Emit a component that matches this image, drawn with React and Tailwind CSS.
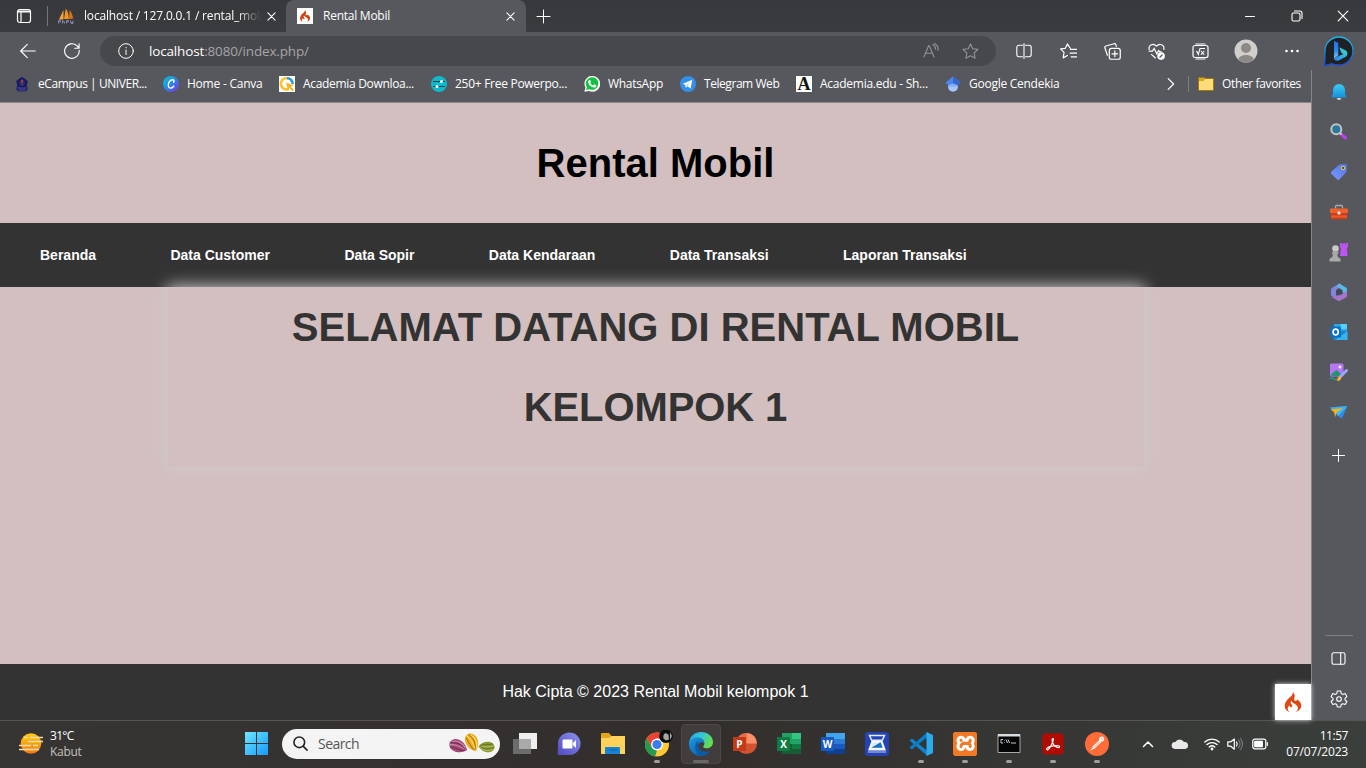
import React from "react";
import { SiCodeigniter, SiXampp } from "react-icons/si";

function Svg({ size = 16, box = 16, children, className = "" }) {
  return (
    <svg width={size} height={size} viewBox={`0 0 ${box} ${box}`} fill="none" className={`shrink-0 ${className}`}>
      {children}
    </svg>
  );
}

function Line({ size = 16, box = 16, w = 1.1, color = "#fff", children }) {
  return (
    <Svg size={size} box={box}>
      <g stroke={color} strokeWidth={w} strokeLinecap="round" strokeLinejoin="round">{children}</g>
    </Svg>
  );
}

const Cross = ({ size = 9, w = 1.2 }) => (
  <Line size={size} box={10} w={w}><path d="M1 1l8 8M9 1l-8 8" /></Line>
);

const starPath = "M8 .9l2.1 4.5 4.9.6-3.6 3.4.9 4.9L8 11.9l-4.3 2.4.9-4.9L1 6l4.9-.6z";

function TitleBar() {
  return (
    <div className="flex h-8 shrink-0 bg-linear-to-b from-[#37383b] to-[#3b3c40]">
      <div className="flex w-[47px] items-center pl-4">
        <Line w={1.2}>
          <rect x="1.500" y="1.500" width="13" height="13" rx="2.200" />
          <path d="M2 3h12M2 4h12M5 4v10" />
        </Line>
      </div>
      <div className="flex w-[239px] items-center">
        <div className="h-5 w-px bg-[#74757a]" />
        <div className="ml-[10px] flex w-4 justify-center">
          <Svg>
            <path d="M1 11.5L5.500 2v9.500z" fill="#f7a33b" />
            <path d="M6 11L7.800.5c2.200 3 3 6.500 3 10.500z" fill="#f39322" />
            <path d="M11 11l.6-9c2.200 2.600 3 5.500 3.500 8.500z" fill="#d8741c" />
            <path d="M.5 15.500v-3h2v1.500h-2M4.500 12v3.500m0-1.700h2v1.700M8.500 15.500v-3h2v1.500h-2M12.500 12.500v2h2.500m0-2v3h-2" stroke="#8b8cb8" strokeWidth=".9" />
          </Svg>
        </div>
        <div className="ml-[10px] w-[178px] whitespace-nowrap text-[12px] tracking-[-0.17px] text-white mask-linear-[90deg,black_86%,transparent_99%]">
          <span>localhost / 127.0.0.1 / rental_mob</span>
        </div>
        <div className="ml-[5px]"><Cross /></div>
      </div>
      <div className="flex w-[240px] items-center rounded-t-lg bg-[#57585d] pl-[11px]">
        <div className="flex h-4 w-4 items-center justify-center bg-white"><SiCodeigniter size={12} color="#d34212" /></div>
        <span className="ml-[10px] w-[183px] whitespace-nowrap text-[12px] tracking-[-0.25px] text-white">Rental Mobil</span>
        <Cross />
      </div>
      <div className="flex grow items-center pl-[10px]">
        <Line size={15} box={15} w={1}><path d="M7.500 1v13M1 7.500h13" /></Line>
      </div>
      <div className="flex items-center pr-[17px]">
        <Line size={12} box={12} w={1}><path d="M1.500 6.500h9" /></Line>
        <div className="ml-[35px]">
          <Line size={12} box={12} w={1.1}>
            <rect x="1" y="3" width="8" height="8" rx="1.600" />
            <path d="M3.400 1h5.300A2.300 2.300 0 0 1 11 3.300v5.200" />
          </Line>
        </div>
        <div className="ml-[34px]"><Cross size={12} w={1} /></div>
      </div>
    </div>
  );
}

function BingLogo() {
  return (
    <svg width="32" height="32" viewBox="0 0 32 32" fill="none">
      <defs>
        <linearGradient id="bingRing" x1="0" y1="0" x2="0" y2="1"><stop stopColor="#1fb7e4" /><stop offset="1" stopColor="#1c4ad0" /></linearGradient>
        <linearGradient id="bingB" x1="0" y1="0" x2="0" y2="1"><stop stopColor="#1e74ea" /><stop offset=".55" stopColor="#2a87f0" /><stop offset="1" stopColor="#7cc2fb" /></linearGradient>
        <linearGradient id="bingC" x1="0" y1="1" x2="1" y2="0"><stop stopColor="#2d7ff5" /><stop offset="1" stopColor="#35e3c6" /></linearGradient>
      </defs>
      <path d="M2.500 30.500q-1 .2-.9-.8L2 16A14 14 0 1 1 16 30c-3 0-5-.3-7-1.200z" fill="#202124" stroke="url(#bingRing)" strokeWidth="1.400" />
      <path d="M11 6l4.300 1.800v12.700L11 23.500z" fill="url(#bingB)" />
      <path d="M16.300 12.200l6.600 3.300c2.200 1.500 1.800 5-.2 6.300l-6.900 3.700c-2 .6-4.500 0-4.800-2.300l9.200-4.200-2.200-1.400z" fill="url(#bingC)" />
    </svg>
  );
}

function Toolbar() {
  return (
    <div className="flex h-[38px] shrink-0 items-center bg-[#57585d]">
      <div className="flex w-[100px] items-center pl-5">
        <Line><path d="M15.300 8H.8M7.300 1.300L.7 8l6.600 6.700" /></Line>
        <div className="ml-7">
          <Line w={1.15}><path d="M15.200 7.400A7.300 7.300 0 1 1 12.800 2.600L14.900 5M15.100 .8v4.400h-4.400" /></Line>
        </div>
      </div>
      <div className="flex h-[30px] w-[896px] items-center rounded-full bg-[#47484b] pl-[18px]">
        <Line w={1}><circle cx="8" cy="8" r="7.300" /><path d="M8 7v4.500M8 4.500v.3" /></Line>
        <div className="ml-[15px] w-[774px] whitespace-nowrap text-[13.500px] tracking-[-0.16px] text-white">localhost<span className="text-[#a6a6a8]">:8080/index.php/</span></div>
        <Line color="#929396" w={1.1}><path d="M1 14L5.600 2.800h.8L11 14M2.700 10.200h6.600M9.800 1.500c2 1 2.900 2.900 2.700 4.800M11.500.5c2.900 1.500 4 4.100 3.500 7" /></Line>
        <div className="ml-[23px]"><Line color="#929396" size={17} w={1.05}><path d={starPath} /></Line></div>
      </div>
      <div className="ml-[6px] flex items-center">
        <div className="flex w-11 justify-center">
          <Line w={1.1}><path d="M6.500 2.200H3A2.200 2.200 0 0 0 .8 4.400v7.200A2.200 2.200 0 0 0 3 13.800h3.500M9.500 2.200H13a2.200 2.200 0 0 1 2.200 2.200v7.200a2.200 2.200 0 0 1-2.200 2.200H9.500M8 .6v14.800" /></Line>
        </div>
        <div className="flex w-11 justify-center">
          <Line size={17} w={1.1}><path d="M9.700 5L7 .9 5 5l-4.500.6 3.300 3.200L3 14l4-2.300M10 6h5.800M9.500 9.500h6.300M10.500 13h5.300" /></Line>
        </div>
        <div className="flex w-11 justify-center">
          <Line size={17} w={1.15}><rect x="5" y="5" width="10.300" height="10.300" rx="2" /><path d="M10.200 7.500v5.300M7.500 10.200h5.300M3.200 11.500L.8 4.500Q.5 3.200 1.800 2.800L9.500.7q1.200-.3 1.700.9l.4 1.500" /></Line>
        </div>
        <div className="flex w-11 justify-center">
          <Svg size={17}>
            <path d="M1.300 6.300C-.2 2.500 4.500-.5 8 3c3.500-3.500 8.200-.5 6.700 3.300M.6 7.600h3.600l1.600-2.500 2.500 5 1.700-3 1 1.300h2M3 10.500l4.200 3.800" stroke="#fff" strokeWidth="1.150" />
            <circle cx="12.300" cy="12.300" r="3.600" fill="#fff" /><path d="M10.900 13.700l2.800-2.800" stroke="#57585d" strokeWidth="1.200" />
          </Svg>
        </div>
        <div className="flex w-11 justify-center">
          <Svg size={17} box={17}>
            <rect x="1" y="2.500" width="15" height="12" rx="2" stroke="#fff" strokeWidth="1.200" />
            <path d="M3.500 1h10M3.500 16h10M4 8.700l1-.2 1.300 3L8 5.500h5M9 8l3.200 3.700M12.200 8L9 11.700" stroke="#fff" strokeWidth="1.050" />
          </Svg>
        </div>
        <div className="flex w-12 justify-center">
          <Svg size={24} box={24}>
            <circle cx="12" cy="12" r="11.500" fill="#d1cfcb" />
            <circle cx="12" cy="9" r="5" fill="#8d8984" /><path d="M4.300 20.500c1-6 14.400-6 15.400 0C15 24.500 9 24.500 4.300 20.500z" fill="#8d8984" />
          </Svg>
        </div>
        <div className="flex w-11 justify-center">
          <Svg><g fill="#fff"><circle cx="2.500" cy="8" r="1.300" /><circle cx="8" cy="8" r="1.300" /><circle cx="13.500" cy="8" r="1.300" /></g></Svg>
        </div>
        <div className="ml-[9px]"><BingLogo /></div>
      </div>
    </div>
  );
}

function Bookmark({ icon, label, className }) {
  return (
    <div className={`flex shrink-0 items-center gap-2 whitespace-nowrap ${className}`}>
      {icon}
      <span>{label}</span>
    </div>
  );
}

function Bookmarks() {
  return (
    <div className="flex h-[33px] shrink-0 items-center border-b border-[#8b8889] bg-[#57585d] pb-1 pl-[14px] text-[12px] text-white">
      <Bookmark className="w-[149px] tracking-[-0.44px]" label="eCampus | UNIVER..." icon={
        <Svg><path d="M8 .5l6 4.500-1 4 1 4.500-2.500 2h-7L2 13.500l1-4.500-1-4z" fill="#28286f" /><circle cx="8" cy="7" r="4" stroke="#14144e" strokeWidth="1.500" /><path d="M8 3v7M4 12h8M5 14h6" stroke="#454594" /><path d="M7.200 4h1.600v3H7.200z" fill="#c03c38" /></Svg>} />
      <Bookmark className="w-[116px] tracking-[-0.23px]" label="Home - Canva" icon={
        <Svg>
          <defs><linearGradient id="canva" x1="0" y1="0" x2="1" y2="1"><stop stopColor="#08c9cf" /><stop offset=".5" stopColor="#2888e4" /><stop offset="1" stopColor="#8b23ed" /></linearGradient></defs>
          <circle cx="8" cy="8" r="8" fill="url(#canva)" />
          <path d="M10.600 6.300c.8-1 .5-2.600-1-2.600C7 3.700 5 6.800 5.300 9.700c.3 3 3.300 3.200 5.400.5" stroke="#fff" strokeWidth="1.400" strokeLinecap="round" />
        </Svg>} />
      <Bookmark className="w-[152px] tracking-[-0.32px]" label="Academia Downloa..." icon={
        <Svg><path d="M0 0h16v16H0z" fill="#fff" /><path d="M8 2.200A5.600 5.600 0 1 0 9.500 13" stroke="#f9c32c" strokeWidth="2.600" /><path d="M8 2.200a5.600 5.600 0 0 1 5.700 6" stroke="#279bd8" strokeWidth="2.600" /><path d="M7 6.500l7.500 2.700-2.700 1.500 3.200 3-1.500 1.500-3.200-3.200-1.300 2.500z" fill="#f9b51c" /></Svg>} />
      <Bookmark className="w-[153px] tracking-[-0.28px]" label="250+ Free Powerpo..." icon={
        <Svg><circle cx="8" cy="8" r="8" fill="#0eb9cb" /><path d="M2 5.500h12M2 10.500h12" stroke="#163c4a" strokeWidth="1.200" /><circle cx="10.500" cy="5.500" r="1.500" fill="#fff" /><circle cx="6" cy="10.500" r="1.500" fill="#fff" /></Svg>} />
      <Bookmark className="w-[96px] tracking-[-0.3px]" label="WhatsApp" icon={
        <Svg><path d="M.3 15.800l1.200-4A7.900 7.900 0 1 1 5 15z" fill="#fff" /><path d="M2 14l.9-2.800A6.300 6.300 0 1 1 5.500 13.300z" fill="#13c143" /><path d="M5.100 4.200c.8-.6 1.300-.2 1.800 1.300.1.500-.4.900-.7 1.200.7 1.300 1.600 2.200 3.100 2.800l.9-1c.5-.2 1.800.6 2.100.9-.1 1.700-1.500 2.300-2.700 2.100C6.800 11 4.400 8.600 4.100 6c0-.7.400-1.400 1-1.800z" fill="#fff" /></Svg>} />
      <Bookmark className="w-[116px] tracking-[-0.44px]" label="Telegram Web" icon={
        <Svg><circle cx="8" cy="8" r="8" fill="#3390ec" /><path d="M2.500 8l9.800-4.200-1.700 8.600-3.200-2.200-1.700 1.600-.4-3z" fill="#fff" /><path d="M6 9l4-2.800-2.700 4" fill="#a9d1f8" /></Svg>} />
      <Bookmark className="w-[149px] tracking-[-0.26px]" label="Academia.edu - Sh..." icon={
        <span className="flex h-4 w-4 shrink-0 items-center justify-center bg-white font-['Liberation_Serif',serif] text-[18px] leading-none font-bold tracking-normal text-[#161616]">A</span>} />
      <Bookmark className="w-[212px] tracking-[-0.26px]" label="Google Cendekia" icon={
        <Svg><circle cx="8" cy="10.800" r="4.900" fill="#a5c5fb" /><path d="M3.100 10.500a5 5 0 0 1 9.800 0z" fill="#7facf8" /><path d="M8 .5L.3 6.700l3.300 2.600q4.400-3.600 8.800 0l3.300-2.600z" fill="#4e86ee" /><path d="M8 .5l7.700 6.200-3.300 2.600Q10.500 7.500 8 7.200z" fill="#3567d0" /></Svg>} />
      <div className="ml-[8px]"><Line size={12} box={12} w={1.2}><path d="M3.200.6L8.600 6l-5.400 5.400" /></Line></div>
      <div className="ml-[11px] h-4 w-px bg-[#7c7d82]" />
      <div className="ml-[9px] flex items-center gap-2 whitespace-nowrap tracking-[-0.36px]">
        <Svg><path d="M.5 2.500q0-1 1-1h4.300l1.200 1h7.500q1 0 1 1v10q0 1-1 1h-13q-1 0-1-1z" fill="#ffdc7a" stroke="#a1780a" /><path d="M1 2h4.800l1 1.600L5.500 5H1z" fill="#dba51f" /></Svg>
        <span>Other favorites</span>
      </div>
    </div>
  );
}

const menu = ["Beranda", "Data Customer", "Data Sopir", "Data Kendaraan", "Data Transaksi", "Laporan Transaksi"];

function Page() {
  return (
    <div className="flex h-[617px] flex-col bg-[#d3bfbf] font-['Liberation_Sans',Arial,sans-serif]">
      <header className="flex h-[120px] items-center justify-center">
        <h1 className="text-[40px] leading-none font-bold text-black">Rental Mobil</h1>
      </header>
      <nav className="flex h-16 items-center gap-[74.4px] bg-[#333] pl-10 text-[14px] font-bold whitespace-nowrap text-white">
        {menu.map((m) => <a key={m}>{m}</a>)}
      </nav>
      <main className="grow">
        <div className="mx-auto h-[180px] w-[976px] bg-[#d3bfbf] text-center text-[40px] leading-[80px] font-bold text-[#333] shadow-[0_0_15px_1px_#ccc]">
          <h2>SELAMAT DATANG DI RENTAL MOBIL</h2>
          <h2 className="tracking-[-0.1px]">KELOMPOK 1</h2>
        </div>
      </main>
      <footer className="relative flex h-14 items-center bg-[#333] text-[16px] text-white">
        <div className="w-9" />
        <p className="grow text-center">Hak Cipta © 2023 Rental Mobil kelompok 1</p>
        <div className="mt-5 flex h-9 w-9 items-center justify-center bg-white shadow-[0_0_5px_#ddd]"><SiCodeigniter size={20} color="#dd4814" /></div>
      </footer>
    </div>
  );
}

const sideIcons = [
  <Svg key="bell" size={18} box={18}><defs><linearGradient id="bell" x1="0" y1="0" x2="0" y2="1"><stop stopColor="#3ccbf4" /><stop offset="1" stopColor="#1490df" /></linearGradient></defs><path d="M6.500 15h5l-1.500 2H8z" fill="#ccc" /><path d="M9 1a6 6 0 0 1 6 6v4l1.300 2.300q.4 1.200-.8 1.200h-13q-1.200 0-.8-1.200L3 11V7a6 6 0 0 1 6-6z" fill="url(#bell)" /></Svg>,
  <Svg key="search" size={18} box={18}><path d="M11.500 11.500l4 3.500" stroke="#c13ff0" strokeWidth="3" strokeLinecap="round" /><path d="M9.500 9.500l2 2" stroke="#ccc" strokeWidth="2" /><circle cx="6.300" cy="6.300" r="5" fill="#28799e" stroke="#c3c3c1" strokeWidth="2" /></Svg>,
  <Svg key="tag" size={18} box={18}><defs><linearGradient id="tag" x1="1" y1="0" x2="0" y2="1"><stop stopColor="#4b78e8" /><stop offset="1" stopColor="#8097ff" /></linearGradient></defs><path d="M9.500 1.500l6-.5q1.500 0 1.500 1.500L16.500 9l-7 7.300q-1.300 1-2.500 0L1.500 11Q.5 9.800 1.500 8.600z" fill="url(#tag)" /><circle cx="13" cy="5" r="1.700" fill="#344c8a" stroke="#f0c62b" strokeWidth="1.100" /></Svg>,
  <Svg key="box" size={18} box={18}><path d="M5.500 5.500V3.500q0-1 1-1h5q1 0 1 1v2" stroke="#aaa" strokeWidth="1.300" /><rect x="0" y="5.500" width="18" height="4.500" rx=".7" fill="#ef6229" /><path d="M1 10h16v5.500q0 .8-.8.800H1.800q-.8 0-.8-.8z" fill="#cf3c18" /><path d="M1 13.500h16" stroke="#ed5a28" strokeWidth="2" /><circle cx="9" cy="10" r="1.700" fill="#ddd" /></Svg>,
  <Svg key="games" size={19} box={19}><path d="M11 0h2v1.500h1V0h2v1.500h1V0h2v4l-1.200 1 .7 8H11l.9-8-.9-1z" fill="#bd54f5" /><circle cx="6.500" cy="5.500" r="3.300" fill="#c9c9c9" /><path d="M3.500 8.500h6V10l-1 1v2.500l3 2.500v2.500h-11V16l3.200-2.500V11l-.9-1z" fill="#aaa" /></Svg>,
  <Svg key="m365" size={18} box={18}><path d="M10 .3L2.500 4.500Q1 5.300 1 7v5.500l5 2.800V8.200q0-1.500 1.300-2.300L12 3.200z" fill="#8583db" /><path d="M9 .5l7 4q1 .7 1 2V12l-4.500-2.500V7L6.500 3.500z" fill="#57bae9" /><path d="M17 10v3q0 1-1 1.500l-6 3.200q-1 .5-2 0L1.500 14l9.500-2.500L17 8z" fill="#a475ca" /><path d="M9 6l3.300 1.800v3L9 12.500 6 11V7.700z" fill="#44475a" /></Svg>,
  <Svg key="outlook" size={18} box={18}><path d="M4 1h13v9H4z" fill="#28a8e8" /><path d="M10.500 1H17v5h-6.500z" fill="#56cffa" /><path d="M3.500 8h14v9h-14z" fill="#1683d0" /><path d="M5 17L17.500 8v9z" fill="#36b2ee" /><rect x=".5" y="3.500" width="10.500" height="11" rx="1" fill="#0870c3" /><ellipse cx="5.700" cy="9" rx="2.600" ry="2.900" stroke="#fff" strokeWidth="1.600" /></Svg>,
  <Svg key="image" size={19} box={19}><rect x="1" y=".5" width="13.500" height="13" rx="1.500" fill="#b777f4" /><path d="M1 12.500l5.500-5q1-.7 2 0l5 5-1.500 1z" fill="#20966e" /><circle cx="11" cy="4" r="1.500" fill="#f6e8ff" /><path d="M17.500 7.500L11 14" stroke="#9ba4f5" strokeWidth="3" strokeLinecap="round" /><path d="M10.500 13l2 2-2 2.700H7.500q1.500-1.200 1-2.500z" fill="#f8b52d" /><path d="M.5 16q3-2 4-.5c.8 1.500 2 .7 3.500.7" stroke="#1ba67a" strokeWidth="1.300" /></Svg>,
  <Svg key="plane" size={18} box={18}><path d="M0 4.500L17.500 3 12 15.500 8 13z" fill="#2d8ce7" /><path d="M17.500 3L8 13l-2.500-4z" fill="#45b8f8" /><path d="M0 4.500L17 3 5.500 9z" fill="#3bb1ef" /><path d="M.5 6.500L13 5 6.500 9.500 5.200 14 4 9z" fill="#fbb416" /></Svg>,
];

function Sidebar() {
  return (
    <aside className="flex h-[650px] w-[55px] shrink-0 flex-col items-center border-l border-[#85868a] bg-[#57585d] pt-[2px] pr-px">
      {sideIcons.map((i, n) => <div key={n} className="flex h-10 w-10 shrink-0 items-center justify-center">{i}</div>)}
      <div className="mt-[7px] flex h-8 items-center"><Line size={13} box={13} w={1}><path d="M6.500.5v12M.5 6.500h12" /></Line></div>
      <div className="mt-[164px] h-px w-7 bg-[#7f8084]" />
      <div className="mt-[15px]"><Line size={15} box={15} w={1.1}><rect x="1" y="1.700" width="13" height="11.600" rx="1.800" /><path d="M9.700 2v11" /></Line></div>
      <div className="mt-6"><Line size={18} box={18} w={1.1}><circle cx="9" cy="9" r="2.300" /><path d="M7.300 1h3.400l.5 2.500 1.500.9 2.500-.8 1.700 3-1.900 1.700v1.500l1.900 1.700-1.700 3-2.500-.8-1.500.8-.5 2.500H7.300l-.5-2.500-1.500-.8-2.500.8-1.700-3L3 9.800V8.300L1.100 6.600l1.700-3 2.500.8 1.500-.9z" /></Line></div>
    </aside>
  );
}

function Task({ children, running, active }) {
  return (
    <div className="flex h-10 w-11 shrink-0 items-center justify-center">
      <div className={`flex h-10 w-10 flex-col items-center justify-end rounded ${active ? "border border-[#4b4846] bg-[#403d3c]" : "border border-transparent"}`}>
        <div className="flex h-7 items-center">{children}</div>
        <div className={`mt-[2px] h-[3px] rounded-full ${active ? "w-4 bg-[#6a6867]" : running ? "w-[6px] bg-[#a09f9e]" : "w-0"}`} />
      </div>
    </div>
  );
}

function Office({ letter, children, bg }) {
  return (
    <div className="relative">
      <Svg size={24} box={24}>{children}</Svg>
      <span className={`absolute top-[5px] left-0 flex h-[14px] w-[13px] items-center justify-center font-['Open_Sans',sans-serif] text-[10px] leading-none font-bold text-white ${bg}`}>{letter}</span>
    </div>
  );
}

function Pod({ x, y, angle, fill, light, dark, s = 1 }) {
  return (
    <g transform={`translate(${x} ${y}) rotate(${angle}) scale(${s})`}>
      <path d="M-9 0C-8-8 4-9 10 1 4 8-8 8-9 0z" fill={fill} />
      <path d="M-7-2C-3-5 4-5 8 0M-8 1.500C-3-.5 4-.5 8 1" stroke={light} strokeWidth="1.100" fill="none" />
      <path d="M-8-.5C-3-3 3-3 8 .5M-7 3.500C-3 2.500 4 4 8 1.500" stroke={dark} strokeWidth=".9" fill="none" />
    </g>
  );
}

function Taskbar() {
  return (
    <div className="flex h-12 shrink-0 items-center border-t border-[#565554] bg-linear-to-r from-[#373534] via-[#322e2c] to-[#3a3f3c] pb-[2px]">
      <div className="flex w-[234px] items-center pl-[19px]">
        <Svg size={24} box={24}>
          <defs><linearGradient id="sun" x1="0" y1="0" x2="0" y2="1"><stop stopColor="#ffce0b" /><stop offset="1" stopColor="#f47713" /></linearGradient></defs>
          <circle cx="12" cy="11.500" r="10.300" fill="url(#sun)" />
          <path d="M5 5.500h4M11 5.500h13M9 9.500h15M0 13.500h12M14 13.500h5M0 17.500h20" stroke="#f7dcae" strokeWidth="1.600" />
        </Svg>
        <div className="ml-[7px] flex flex-col text-[12px] leading-4 whitespace-nowrap">
          <span className="tracking-[-0.7px] text-white">31°C</span>
          <span className="tracking-[-0.3px] text-[#c2c0bf]">Kabut</span>
        </div>
      </div>
      <div className="flex w-11 justify-center">
        <Svg size={23} box={23}>
          <defs><linearGradient id="win" gradientUnits="userSpaceOnUse" x1="0" y1="0" x2="23" y2="23"><stop stopColor="#70e5ff" /><stop offset="1" stopColor="#139aff" /></linearGradient></defs>
          <path d="M0 0h11v11H0zM12 0h11v11H12zM0 12h11v11H0zM12 12h11v11H12z" fill="url(#win)" />
        </Svg>
      </div>
      <div className="ml-1 flex h-[30px] w-[218px] items-center rounded-full bg-[#f4f4f4] pl-[11px]">
        <Line color="#222" w={1.7} size={15}><circle cx="6.700" cy="6.700" r="5.700" /><path d="M11 11l4 4" /></Line>
        <span className="ml-[10px] w-[128px] text-[14px] tracking-[-0.55px] text-[#555]">Search</span>
        <svg width="50" height="22" viewBox="0 0 50 22">
          <Pod x={12} y={13} angle={20} fill="#a34976" light="#cf8aa9" dark="#642c49" />
          <Pod x={26} y={9} angle={62} fill="#edae27" light="#fbdc6f" dark="#a96d0c" />
          <Pod x={41} y={14} angle={180} fill="#8d9a30" light="#b8c25c" dark="#556425" s={0.85} />
        </svg>
      </div>
      <div className="ml-[3px] flex">
        <Task><Svg size={24} box={24}><path d="M6 1h18v16H6z" fill="#efefef" /><path d="M0 7h18v15H0z" fill="#777" fillOpacity=".85" /><path d="M6 7h12v10H6z" fill="#aaa" /></Svg></Task>
        <Task><Svg size={24} box={24}><defs><linearGradient id="chat" x1="1" y1="0" x2="0" y2="1"><stop stopColor="#8a93ee" /><stop offset="1" stopColor="#5049c0" /></linearGradient></defs><path d="M1.500 23q-1 0-.9-1L1 12A11.300 11.300 0 1 1 12 23z" fill="url(#chat)" /><rect x="5.500" y="7.500" width="10" height="9" rx="1" fill="#fff" /><path d="M16 11l3-3v8l-3-3z" fill="#fff" /></Svg></Task>
        <Task><Svg size={24} box={24}><path d="M0 3.500V2q0-1 1-1h7l2.500 3H23v5H0z" fill="#e3a51b" /><path d="M0 6h8l2.500-2H24v18H0z" fill="#ffd35b" /><path d="M4 22v-6q0-1 1-1h13q1 0 1 1v6z" fill="#1584d5" /><path d="M8 18h8" stroke="#0b629f" /></Svg></Task>
        <Task running>
          <svg width="32" height="28" viewBox="-2 0 32 28">
            <circle cx="14" cy="14.500" r="12" fill="#fcc934" />
            <path d="M3.600 8.500A12 12 0 0 1 24.400 8.500H14l-5 9z" fill="#ea4335" />
            <path d="M3.600 8.500L9 17.500l5 3-2 5.900A12 12 0 0 1 3.600 8.500z" fill="#239a50" />
            <circle cx="14" cy="14.500" r="5.900" fill="#fff" /><circle cx="14" cy="14.500" r="4.600" fill="#3c7ded" />
            <circle cx="23" cy="6.300" r="6.800" fill="#0c0c0c" /><path d="M20.500 8.500q-1-4 2-5.500l3 1.500.5 5-3 1zM27 2l2 4-2 4" fill="#a5a5a5" />
          </svg>
        </Task>
        <Task active>
          <Svg size={24} box={24}>
            <defs>
              <linearGradient id="edgeTop" x1="0" y1="0" x2="1" y2=".45"><stop stopColor="#20a9e6" /><stop offset=".5" stopColor="#34c5d9" /><stop offset="1" stopColor="#64dd4d" /></linearGradient>
              <linearGradient id="edgeLow" x1="0" y1="0" x2="1" y2="1"><stop stopColor="#1b9ce2" /><stop offset="1" stopColor="#0a4a9b" /></linearGradient>
            </defs>
            <path d="M.2 10.500C1 4 6 0 12 0c7 0 12 4.500 12 10 0 4-3 6.300-6.500 6.300-3 0-4-1.300-2.700-2.700 1.700-2.500-.5-5.500-4.300-5.500z" fill="url(#edgeTop)" />
            <path d="M.1 10.800C1.500 7 5 5.500 8.500 5.500c5 0 7.500 3.400 6.800 6.500-1-2.500-4.500-2.500-5.800.5-1.800 4.500 4 9.500 11.500 6.500C18 23 14.500 24.200 11 24 4.500 23.500-.5 17.500.1 10.800z" fill="url(#edgeLow)" />
            <path d="M9 9C5 12 5 20 11.500 24c4 .2 7.500-1.800 9.500-5-7 3-13-2-11.500-6.500z" fill="#0d5aa7" />
          </Svg>
        </Task>
        <Task><Office letter="P" bg="bg-[#c13b1b]"><circle cx="13.500" cy="11.500" r="10.500" fill="#d35230" /><path d="M13.500 1A10.500 10.500 0 0 0 3 11.500h10.500z" fill="#ed6c47" /><path d="M13.500 1A10.500 10.500 0 0 1 24 11.500H13.500z" fill="#ff8f6b" /></Office></Task>
        <Task><Office letter="X" bg="bg-[#107c41]"><path d="M5 1h19v21H5z" fill="#185c37" /><path d="M5 1h10v11H5z" fill="#21a366" /><path d="M15 1h9v6h-9z" fill="#33c481" /><path d="M15 7h9v5h-9z" fill="#21a366" /><path d="M15 12h9v5h-9z" fill="#107c41" /></Office></Task>
        <Task><Office letter="W" bg="bg-[#185abd]"><path d="M5 1h19v6H5z" fill="#41a5ee" /><path d="M5 7h19v5H5z" fill="#2b7cd3" /><path d="M5 12h19v5H5z" fill="#185abd" /><path d="M5 17h19v5H5z" fill="#103f91" /></Office></Task>
        <Task><Svg size={24} box={24}><rect width="24" height="24" rx="3" fill="#2444b6" /><path d="M4.500 3.500h15l-2.200 4.800H6.700z" stroke="#e7effa" strokeWidth="1.500" /><path d="M6.500 9h11l3.500 9.500H3z" fill="#f5f8ff" /><path d="M8 10.700h8l1.600 5H6.400z" fill="#dce7fb" /><path d="M6.400 15.700l9.200-5.500 2 5.500z" fill="#176fc0" /><path d="M3 20h18" stroke="#c3cdf0" /></Svg></Task>
        <Task running><Svg size={24} box={24}><path d="M.5 8.500l2.500-2 15.500 12.500v5z" fill="#1483cd" /><path d="M.5 15.500l2.500 2L18.500 5V0z" fill="#087dc5" /><path d="M17.500 0L24 3v18l-6.500 3z" fill="#2bacef" /></Svg></Task>
        <Task running><div className="flex h-6 w-6 items-center justify-center overflow-hidden rounded-[3px] bg-[#f27a26]"><div className="flex h-[18px] w-[20px] items-center justify-center bg-white"><SiXampp size={25} color="#f27a26" className="shrink-0" /></div></div></Task>
        <Task running><Svg size={24} box={24}><path d="M1 2.500h22v18H1z" fill="#050505" stroke="#aaa" /><path d="M1 2h22v2.500H1z" fill="#d7dce1" /><path d="M6 7.500H4v3.500h2M7.500 8.500v.5m0 1.500v.5M9 7.500l1.500 3.500M11 7.500l1.500 3.500M14 11h5" stroke="#e2e2e2" strokeWidth=".9" /></Svg></Task>
        <Task running><Svg size={24} box={24}><rect x="1.500" y="1.500" width="21" height="21" rx="3.500" fill="#b30b00" /><path d="M12 6.500c-1.500 0-.9 3.500.5 6 1.500 2.600 5.300 3.900 6 2.500.7-1.600-4.500-1.700-8.200-.8C7 15 5 16.700 5.800 17.600c1.200 1.200 3.400-2.200 4.800-5.200 1.600-3.500 2.400-5.900 1.400-5.900z" stroke="#fff" strokeWidth="1.200" /></Svg></Task>
        <Task running><Svg size={24} box={24}><circle cx="12" cy="12" r="12" fill="#ff6c37" /><circle cx="16.700" cy="6.900" r="2.500" fill="#fff" /><path d="M14.500 8l2 2-7 6.500-2-2z" fill="#fff" /><path d="M5 18.500l3-3.500 1.700 1.600z" fill="#fff" /><path d="M9.500 15l5-5M15.800 6.900l2 .3" stroke="#ff6c37" strokeWidth=".7" /></Svg></Task>
      </div>
      <div className="ml-[23px]"><Line size={12} box={12} w={1.500}><path d="M1.500 8.500L6 4l4.500 4.500" /></Line></div>
      <div className="ml-[17px]"><Svg size={18} box={18}><path d="M4 14a3.500 3.500 0 0 1 .3-7A5 5 0 0 1 13 7a3.500 3.500 0 0 1 1 7z" fill="#e9e9e9" /></Svg></div>
      <div className="ml-[15px]"><Line w={1.400}><path d="M.8 6a10.500 10.500 0 0 1 14.400 0M3 8.600a7.300 7.300 0 0 1 10 0M5.300 11a4 4 0 0 1 5.400 0" /><circle cx="8" cy="13" r=".7" fill="#fff" /></Line></div>
      <div className="ml-[7px]"><Line w={1.200}><path d="M.8 5.800h3L7.300 3v10.200l-3.500-3h-3z" /><path d="M9.500 6q1.500 2 0 4" /><path d="M11.500 4q3 4 0 8M13.500 2.500q4 5.500 0 11" stroke="#757575" /></Line></div>
      <div className="ml-[9px]"><Line w={1.200}><rect x=".8" y="3.200" width="13" height="9.600" rx="2" /><rect x="2.800" y="5.300" width="7.500" height="5.400" fill="#fff" /><path d="M15.300 6.500v3" /></Line></div>
      <div className="ml-auto mr-[18px] flex flex-col items-end text-[12px] leading-4 whitespace-nowrap text-white">
        <span className="tracking-[-0.45px]">11:57</span>
        <span className="tracking-[-0.2px]">07/07/2023</span>
      </div>
    </div>
  );
}

export default function App() {
  return (
    <div className="flex h-[768px] w-[1366px] flex-col overflow-hidden bg-[#57585d] font-['Open_Sans',sans-serif]">
      <TitleBar />
      <Toolbar />
      <div className="flex h-[650px] shrink-0">
        <div className="flex w-[1311px] flex-col">
          <Bookmarks />
          <Page />
        </div>
        <Sidebar />
      </div>
      <Taskbar />
    </div>
  );
}
